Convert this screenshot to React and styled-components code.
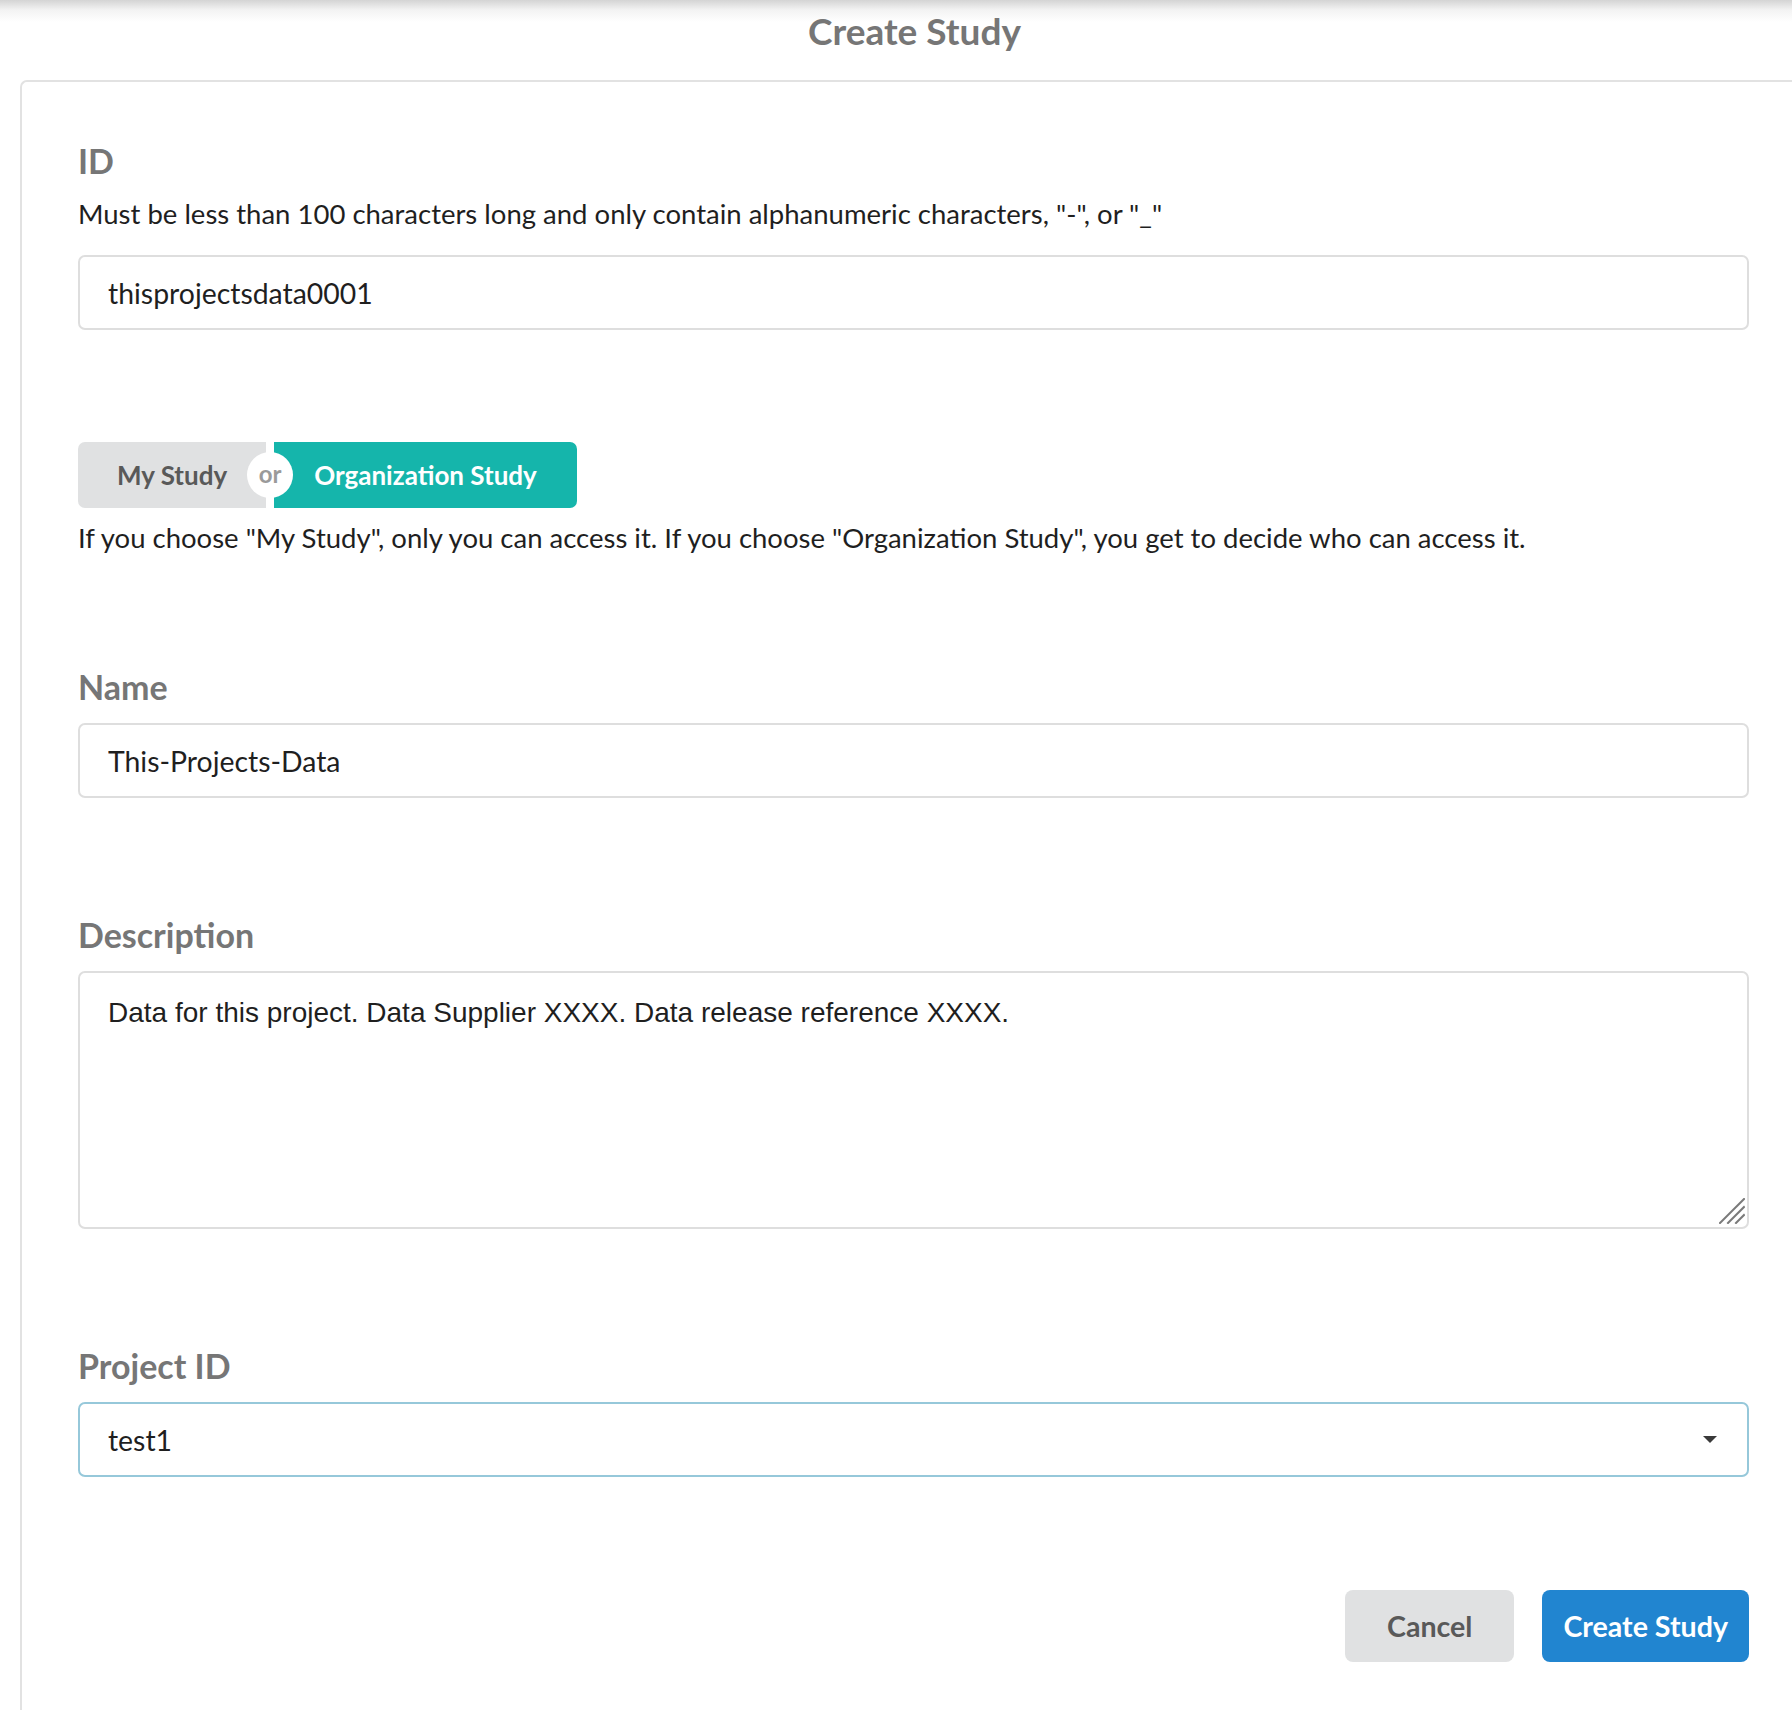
import React from "react";
import styled, { createGlobalStyle } from "styled-components";

const Global = createGlobalStyle`
  html, body { margin: 0; padding: 0; background: #fff; overflow: hidden; }
  body { font-family: Lato, "Noto Sans", sans-serif; color: rgba(0,0,0,0.87); }
  * { box-sizing: border-box; }
`;

const Page = styled.div`
  position: relative;
  min-height: 1710px;
  background: linear-gradient(to bottom, #d4d4d4 0px, #f3f3f3 10px, #ffffff 22px);
  padding-left: 20px;
`;

const Title = styled.h1`
  margin: 0;
  width: 1789px;
  height: 80px;
  padding-top: 10px;
  font-family: Lato, sans-serif;
  font-weight: 700;
  font-size: 37px;
  line-height: 42px;
  color: #767676;
  text-align: center;
`;

const Card = styled.div`
  width: 1789px;
  min-height: 1640px;
  border: 2px solid #e2e2e2;
  border-right: none;
  border-bottom: none;
  border-radius: 7px 0 0 0;
  padding: 58px 56px 0 56px;
  background: #fff;
`;

const Field = styled.div`
  display: flex;
  flex-direction: column;
  margin-top: ${(p) => p.$top || 0}px;
`;

const Label = styled.label`
  font-weight: 700;
  font-size: 34px;
  line-height: 41px;
  color: #767676;
  margin-bottom: ${(p) => p.$gap ?? 16}px;
`;

const Help = styled.p`
  margin: 0;
  font-size: 27.5px;
  line-height: 31px;
  color: #1f1f1f;
`;

const TextInput = styled.input`
  display: block;
  width: 1671px;
  height: 75px;
  border: 2px solid #dedede;
  border-radius: 7px;
  padding: 0 28px;
  font-family: Lato, sans-serif;
  font-size: 28.4px;
  color: #1f1f1f;
  background: #fff;
  outline: none;
  margin-top: ${(p) => p.$top || 0}px;
`;

const AreaWrap = styled.div`
  position: relative;
  width: 1671px;
  height: 258px;
`;

const TextArea = styled.textarea`
  display: block;
  width: 100%;
  height: 100%;
  border: 2px solid #dedede;
  border-radius: 7px;
  padding: 24px 28px;
  font-family: "Liberation Sans", Arial, sans-serif;
  font-size: 28px;
  line-height: 32px;
  color: #1f1f1f;
  background: #fff;
  outline: none;
  resize: none;
`;

const Grip = styled.svg`
  position: absolute;
  right: 4px;
  bottom: 5px;
  width: 26px;
  height: 26px;
  pointer-events: none;
`;

const Select = styled.div`
  display: flex;
  align-items: center;
  justify-content: space-between;
  width: 1671px;
  height: 75px;
  border: 2px solid #96c8da;
  border-radius: 7px;
  padding: 0 28px 0 28px;
  font-size: 28.4px;
  color: #1f1f1f;
`;

const Caret = styled.span`
  width: 0;
  height: 0;
  border-left: 7px solid transparent;
  border-right: 7px solid transparent;
  border-top: 7px solid #3a3a3a;
  margin-right: 2px;
`;

const Toggle = styled.div`
  display: flex;
  align-items: stretch;
  height: 66px;
  margin-top: 112px;
  margin-bottom: 14px;
`;

const Segment = styled.button`
  border: none;
  margin: 0;
  padding: 0 ${(p) => p.$pad}px;
  font-family: Lato, sans-serif;
  font-weight: 700;
  font-size: 26px;
  color: ${(p) => (p.$active ? "#ffffff" : "#595959")};
  background: ${(p) => (p.$active ? "#15b5ab" : "#e0e1e2")};
  border-radius: ${(p) => p.$radius};
`;

const Or = styled.div`
  position: relative;
  width: 8px;
  background: #fff;
  &::before {
    content: "or";
    position: absolute;
    left: 50%;
    top: 50%;
    width: 46px;
    height: 46px;
    margin: -23px 0 0 -23px;
    border-radius: 50%;
    background: #fff;
    color: #9a9a9a;
    font-weight: 700;
    font-size: 24px;
    line-height: 44px;
    text-align: center;
  }
`;

const Actions = styled.div`
  display: flex;
  justify-content: flex-end;
  gap: 28px;
  width: 1671px;
  margin-top: 113px;
`;

const Button = styled.button`
  height: 72px;
  border: none;
  border-radius: 8px;
  padding: 0 ${(p) => p.$pad}px;
  font-family: Lato, sans-serif;
  font-weight: 700;
  font-size: 28.6px;
  color: ${(p) => (p.$primary ? "#ffffff" : "#595959")};
  background: ${(p) => (p.$primary ? "#2185d0" : "#e0e1e2")};
`;

export default function App() {
  return (
    <>
      <Global />
      <Page>
        <Title>Create Study</Title>
        <Card>
          <Field>
            <Label $gap={17}>ID</Label>
            <Help>
              Must be less than 100 characters long and only contain alphanumeric characters, "-", or "_"
            </Help>
            <TextInput $top={26} defaultValue="thisprojectsdata0001" />
          </Field>

          <Toggle>
            <Segment $pad={39} $radius="7px 0 0 7px">My Study</Segment>
            <Or />
            <Segment $pad={40} $active $radius="0 7px 7px 0">Organization Study</Segment>
          </Toggle>
          <Help>
            If you choose "My Study", only you can access it. If you choose "Organization Study", you get to decide who can access it.
          </Help>

          <Field $top={113}>
            <Label>Name</Label>
            <TextInput defaultValue="This-Projects-Data" />
          </Field>

          <Field $top={116}>
            <Label>Description</Label>
            <AreaWrap>
              <TextArea defaultValue="Data for this project. Data Supplier XXXX. Data release reference XXXX." />
              <Grip viewBox="0 0 26 26">
                <g stroke="#7a7a7a" strokeWidth="2" strokeLinecap="square">
                  <line x1="1" y1="25" x2="25" y2="1" />
                  <line x1="9" y1="25" x2="25" y2="9" />
                  <line x1="17" y1="25" x2="25" y2="17" />
                </g>
              </Grip>
            </AreaWrap>
          </Field>

          <Field $top={116}>
            <Label>Project ID</Label>
            <Select>
              <span>test1</span>
              <Caret />
            </Select>
          </Field>

          <Actions>
            <Button $pad={42}>Cancel</Button>
            <Button $pad={21} $primary>Create Study</Button>
          </Actions>
        </Card>
      </Page>
    </>
  );
}
